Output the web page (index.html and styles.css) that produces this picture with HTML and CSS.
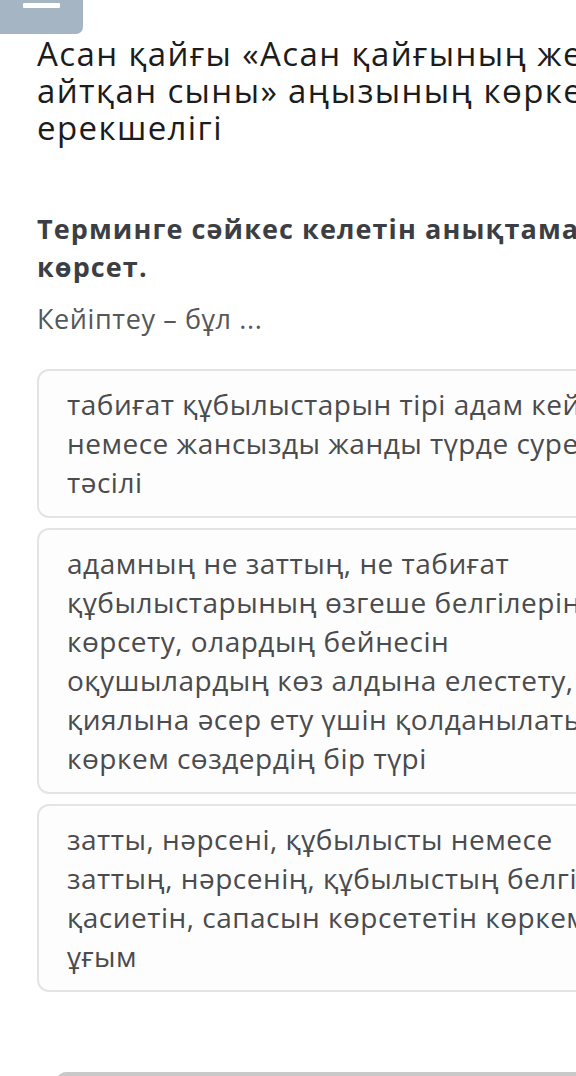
FILE: index.html
```html
<!DOCTYPE html>
<html lang="kk">
<head>
<meta charset="utf-8">
<title>Кейіптеу</title>
<link rel="stylesheet" href="styles.css">
</head>
<body>
<div class="page">
  <div class="menu-btn"><span class="menu-bar"></span></div>
  <main class="content">
    <h1 class="title">Асан қайғы «Асан қайғының жерге<br>айтқан сыны» аңызының көркемдік<br>ерекшелігі</h1>
    <h2 class="question">Терминге сәйкес келетін анықтаманы<br>көрсет.</h2>
    <p class="prompt">Кейіптеу – бұл ...</p>
    <div class="options">
      <div class="option">табиғат құбылыстарын тірі адам кейпінде<br>немесе жансызды жанды түрде суреттеу<br>тәсілі</div>
      <div class="option">адамның не заттың, не табиғат<br>құбылыстарының өзгеше белгілерін<br>көрсету, олардың бейнесін<br>оқушылардың көз алдына елестету,<br>қиялына әсер ету үшін қолданылатын<br>көркем сөздердің бір түрі</div>
      <div class="option">затты, нәрсені, құбылысты немесе<br>заттың, нәрсенің, құбылыстың белгісін,<br>қасиетін, сапасын көрсететін көркемдік<br>ұғым</div>
    </div>
    <div class="footer-btn"></div>
  </main>
</div>
</body>
</html>
```

FILE: styles.css
```css
html, body {
  margin: 0;
  padding: 0;
  background: #ffffff;
  overflow: hidden;
}
.page {
  width: 576px;
  height: 1076px;
  overflow: hidden;
  position: relative;
  font-family: "Open Sans", "Noto Sans", sans-serif;
}
.menu-btn {
  position: absolute;
  left: 0;
  top: 0;
  width: 83px;
  height: 34px;
  background: #a5b5c3;
  border-bottom-right-radius: 7px;
}
.menu-bar {
  position: absolute;
  left: 23px;
  top: 3px;
  width: 37px;
  height: 5px;
  background: #ffffff;
  border-radius: 1px;
}
.content {
  width: 1000px;
  padding: 35px 0 0 37px;
  display: flex;
  flex-direction: column;
}
.title {
  margin: 0;
  font-size: 33px;
  line-height: 37px;
  letter-spacing: 1.4px;
  font-weight: 400;
  color: #1c1c1c;
  white-space: nowrap;
}
.question {
  margin: 64px 0 0;
  font-size: 27px;
  line-height: 38px;
  letter-spacing: 1.1px;
  font-weight: 700;
  color: #3b3e44;
  white-space: nowrap;
}
.prompt {
  margin: 14px 0 0;
  font-size: 27px;
  line-height: 38px;
  letter-spacing: 0.6px;
  font-weight: 400;
  color: #55575a;
}
.options {
  margin-top: 31px;
  display: flex;
  flex-direction: column;
  gap: 10px;
}
.option {
  border: 2px solid #e4e4e4;
  border-radius: 12px;
  background: #fdfdfd;
  padding: 14px 28px;
  font-size: 28px;
  line-height: 39px;
  letter-spacing: 0.5px;
  color: #4a4b4d;
  white-space: nowrap;
}
.footer-btn {
  margin: 80px 0 0 19px;
  height: 40px;
  border-top: 4px solid #c9c9c9;
  border-radius: 10px 0 0 0;
  background: #fafafa;
}
```
